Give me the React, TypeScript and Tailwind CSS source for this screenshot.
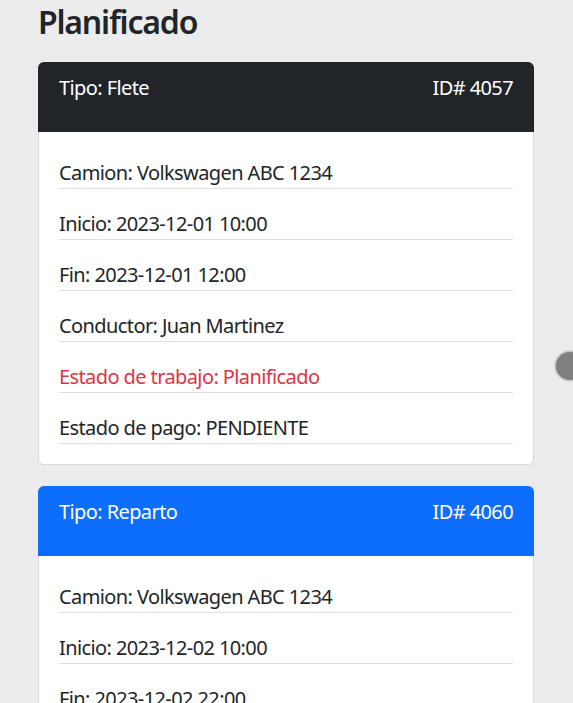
import React from "react";

type Row = { text: string; red?: boolean };
type Job = { tipo: string; id: string; header: string; rows: Row[] };

const jobs: Job[] = [
  {
    tipo: "Flete",
    id: "4057",
    header: "bg-[#212529]",
    rows: [
      { text: "Camion: Volkswagen ABC 1234" },
      { text: "Inicio: 2023-12-01 10:00" },
      { text: "Fin: 2023-12-01 12:00" },
      { text: "Conductor: Juan Martinez" },
      { text: "Estado de trabajo: Planificado", red: true },
      { text: "Estado de pago: PENDIENTE" },
    ],
  },
  {
    tipo: "Reparto",
    id: "4060",
    header: "bg-[#0d6efd]",
    rows: [
      { text: "Camion: Volkswagen ABC 1234" },
      { text: "Inicio: 2023-12-02 10:00" },
      { text: "Fin: 2023-12-02 22:00" },
      { text: "Conductor: Juan Martinez" },
      { text: "Estado de trabajo: Planificado", red: true },
      { text: "Estado de pago: PENDIENTE" },
    ],
  },
];

function Card({ job }: { job: Job }) {
  return (
    <div className="w-[496px] rounded-md border border-[#d6d8db] bg-white">
      <div className={`${job.header} rounded-t-md h-[70px] -mt-px -mx-px px-[21px] pt-[11px] flex justify-between text-white text-[20px] leading-[30px] tracking-[-0.6px]`}>
        <span>Tipo: {job.tipo}</span>
        <span>ID# {job.id}</span>
      </div>
      <div className="px-5 pt-[26px] pb-5 flex flex-col gap-5">
        {job.rows.map((r, i) => (
          <div
            key={i}
            className={`border-b border-[#dee2e6] text-[20px] leading-[30px] tracking-[-0.6px] ${r.red ? "text-[#dc3545]" : "text-[#212529]"}`}
          >
            {r.text}
          </div>
        ))}
      </div>
    </div>
  );
}

export default function App() {
  return (
    <div
      className="min-h-screen bg-[#ececec] pl-[38px] pt-[3px] pb-6"
      style={{ fontFamily: '"Noto Sans", "Open Sans", sans-serif' }}
    >
      <h1 className="text-[32px] leading-[38px] font-semibold text-[#212529] tracking-[-1.2px] mb-[21px]">Planificado</h1>
      <div className="flex flex-col gap-[21px]">
        {jobs.map((j) => (
          <Card key={j.id} job={j} />
        ))}
      </div>
      <div className="fixed left-[556px] top-[352px] w-[28px] h-[28px] rounded-full bg-[#808080] shadow-[0_0_2px_1px_rgba(128,128,128,0.6)]" />
    </div>
  );
}
